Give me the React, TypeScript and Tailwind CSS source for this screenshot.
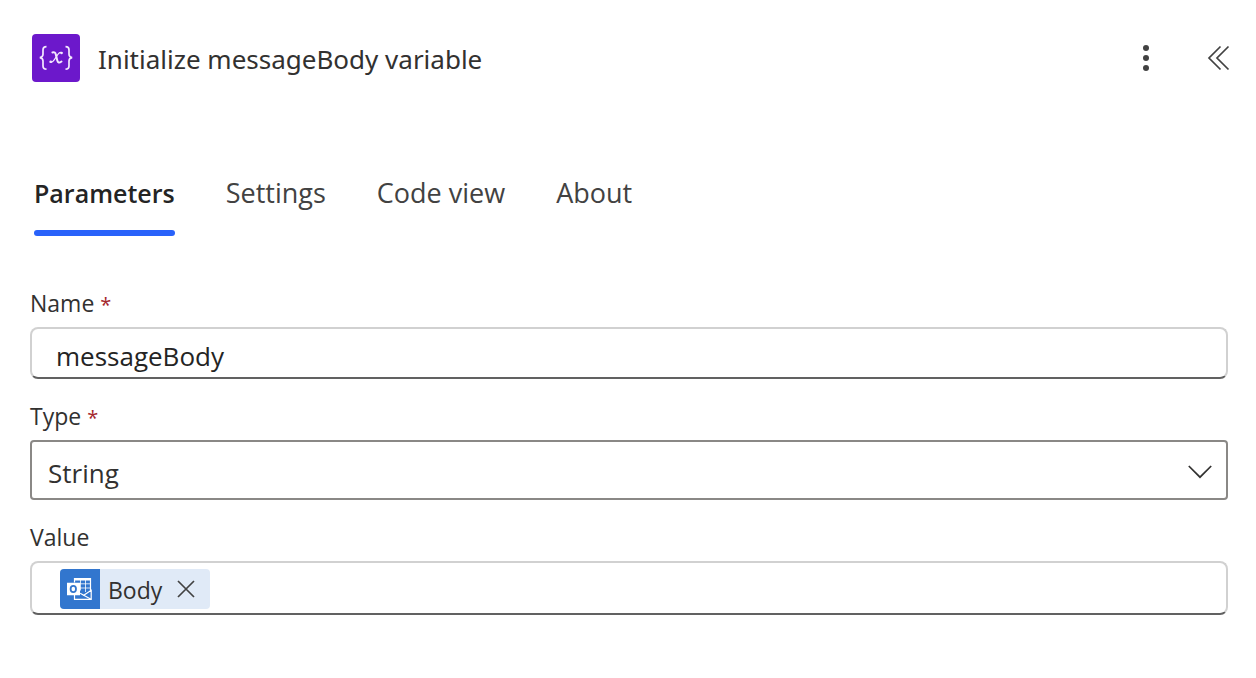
import { useState } from "react";

const tabs = ["Parameters", "Settings", "Code view", "About"];

function VariableIcon() {
  return (
    <span
      aria-hidden="true"
      className="flex size-12 shrink-0 items-center justify-center rounded-sm bg-[#6c18cb]"
    >
      <svg viewBox="0 0 48 48" className="size-12" fill="none" stroke="#f3e9fd">
        <path strokeWidth="1.700" d="M14.500 12.700c-2.600 0-3.500.9-3.500 3v4.600c0 2.100-.9 3-3.200 3.300 2.300.3 3.200 1.400 3.200 3.500v4.800c0 2.100.9 3.200 3.500 3.200" />
        <path strokeWidth="1.700" d="M33.500 12.700c2.600 0 3.500.9 3.500 3v4.600c0 2.100.9 3 3.200 3.300-2.300.3-3.200 1.400-3.200 3.500v4.800c0 2.100-.9 3.200-3.500 3.200" />
        <path strokeWidth="2" strokeLinecap="round" d="M20.400 18.500c2-.8 3 .2 3.500 2.300l1.400 5.800c.5 2.100 1.800 2.700 4.200.9" />
        <path strokeWidth="1.200" strokeLinecap="round" d="M30 18.700c-1.600-.9-2.800-.2-4.200 1.800l-3.400 5.200c-1.400 2.100-2.600 3.200-4.200 2.300" />
        <circle cx="29.500" cy="19" r=".7" strokeWidth="1.200" />
        <circle cx="18.700" cy="27.700" r=".7" strokeWidth="1.200" />
      </svg>
    </span>
  );
}

function OutlookIcon() {
  return (
    <svg viewBox="0 0 40 40" className="size-10 shrink-0" aria-hidden="true">
      <rect width="40" height="40" fill="#3276ce" />
      <g fill="none" stroke="#fff" strokeWidth="1.200">
        <path d="M14.500 13.500V9.600h16v13.500" />
        <path d="M14.500 10.600h16" strokeWidth="1.600" />
        <path d="M18.500 14.800h12M20 19h10.500M20.500 11v10.500M25.500 11v12" strokeWidth=".8" />
        <path d="M14.500 26v4.300h16.700v-9l-7.500 4.900-3.500-2" />
        <path d="m23.700 26.200 7.300 4" />
      </g>
      <path fill="#fff" d="M7 13.800h13v12.500H7z" />
      <ellipse cx="13.300" cy="20" rx="2.700" ry="3.200" fill="none" stroke="#3276ce" strokeWidth="1.800" />
    </svg>
  );
}

function Required() {
  return <span className="text-xl leading-6 text-[#a4262c]">*</span>;
}

export default function App() {
  const [active, setActive] = useState("Parameters");
  const [name, setName] = useState("messageBody");
  const [hasToken, setHasToken] = useState(true);

  return (
    <main className="bg-white pt-[34px] pr-[22px] pb-16 pl-[30px] font-['Open_Sans','Noto_Sans',sans-serif] text-[#323130]">
      <header className="flex h-12 items-center pl-0.5">
        <VariableIcon />
        <h1 className="ml-[18px] flex-1 pt-0.5 font-['Noto_Sans',sans-serif] text-[26px] leading-9">
          Initialize messageBody variable
        </h1>
        <button type="button" aria-label="More commands" className="flex size-8 items-center justify-center">
          <svg viewBox="0 0 32 32" className="size-8" fill="#424242">
            <circle cx="16" cy="6" r="3" />
            <circle cx="16" cy="16" r="3" />
            <circle cx="16" cy="26" r="3" />
          </svg>
        </button>
        <button type="button" aria-label="Collapse panel" className="ml-10 flex size-8 items-center justify-center">
          <svg viewBox="0 0 32 32" className="size-8" fill="none" stroke="#424242" strokeWidth="1.700">
            <path d="M18.500 4.500 7 16l11.500 11.500M26.500 4.500 15 16l11.500 11.500" />
          </svg>
        </button>
      </header>

      <div role="tablist" className="mt-[90px] flex gap-[51px] pl-1">
        {tabs.map((tab) => (
          <button
            key={tab}
            type="button"
            role="tab"
            aria-selected={active === tab}
            onClick={() => setActive(tab)}
            className={
              active === tab
                ? "flex flex-col text-[25px] leading-[42px] font-semibold text-[#242424]"
                : "flex flex-col text-[27px] leading-[42px] text-[#424242]"
            }
          >
            {tab}
            <span
              className={
                active === tab
                  ? "mt-4 h-1.5 w-full rounded-full bg-[#2962fa]"
                  : "mt-4 h-1.5 w-full rounded-full"
              }
            />
          </button>
        ))}
      </div>

      <form className="mt-[51px] mr-1.5 flex flex-col" onSubmit={(e) => e.preventDefault()}>
        <label htmlFor="name" className="text-[23px] leading-8">
          Name <Required />
        </label>
        <input
          id="name"
          value={name}
          onChange={(e) => setName(e.target.value)}
          className="mt-2 h-[52px] w-full rounded-lg border-2 border-[#d1d1d1] border-b-[#616161] bg-white px-6 pt-1.5 text-[26px] text-[#242424] outline-none"
        />

        <label htmlFor="type" className="mt-[21px] text-[23px] leading-8">
          Type <Required />
        </label>
        <div className="relative mt-2">
          <select
            id="type"
            defaultValue="String"
            className="h-[60px] w-full appearance-none rounded-sm border-2 border-[#8a8886] bg-white pt-1.5 pr-16 pl-4 text-[26px] outline-none"
          >
            <option>String</option>
            <option>Boolean</option>
            <option>Integer</option>
            <option>Float</option>
            <option>Object</option>
            <option>Array</option>
          </select>
          <svg
            viewBox="0 0 24 24"
            className="pointer-events-none absolute top-5 right-4 size-6"
            fill="none"
            stroke="#323130"
            strokeWidth="1.700"
            aria-hidden="true"
          >
            <path d="M.8 6 12 17.200 23.200 6" />
          </svg>
        </div>

        <label htmlFor="value" className="mt-[21px] text-[23px] leading-8">
          Value
        </label>
        <div className="mt-2 flex h-[54px] items-center rounded-lg border-2 border-[#d1d1d1] border-b-[#616161] bg-white px-7 pt-0.5">
          {hasToken && (
            <span className="flex h-10 items-center overflow-hidden rounded-sm bg-[#e0eaf7] pr-3">
              <OutlookIcon />
              <span className="ml-2 pt-0.5 text-[23px] leading-8">Body</span>
              <button
                type="button"
                aria-label="Remove Body"
                onClick={() => setHasToken(false)}
                className="ml-3 flex size-6 items-center justify-center"
              >
                <svg viewBox="0 0 24 24" className="size-6" fill="none" stroke="#424242" strokeWidth="1.700">
                  <path d="m4 4 16 16M20 4 4 20" />
                </svg>
              </button>
            </span>
          )}
          <input id="value" className="h-10 min-w-0 flex-1 bg-transparent text-[23px] outline-none" />
        </div>
      </form>
    </main>
  );
}
